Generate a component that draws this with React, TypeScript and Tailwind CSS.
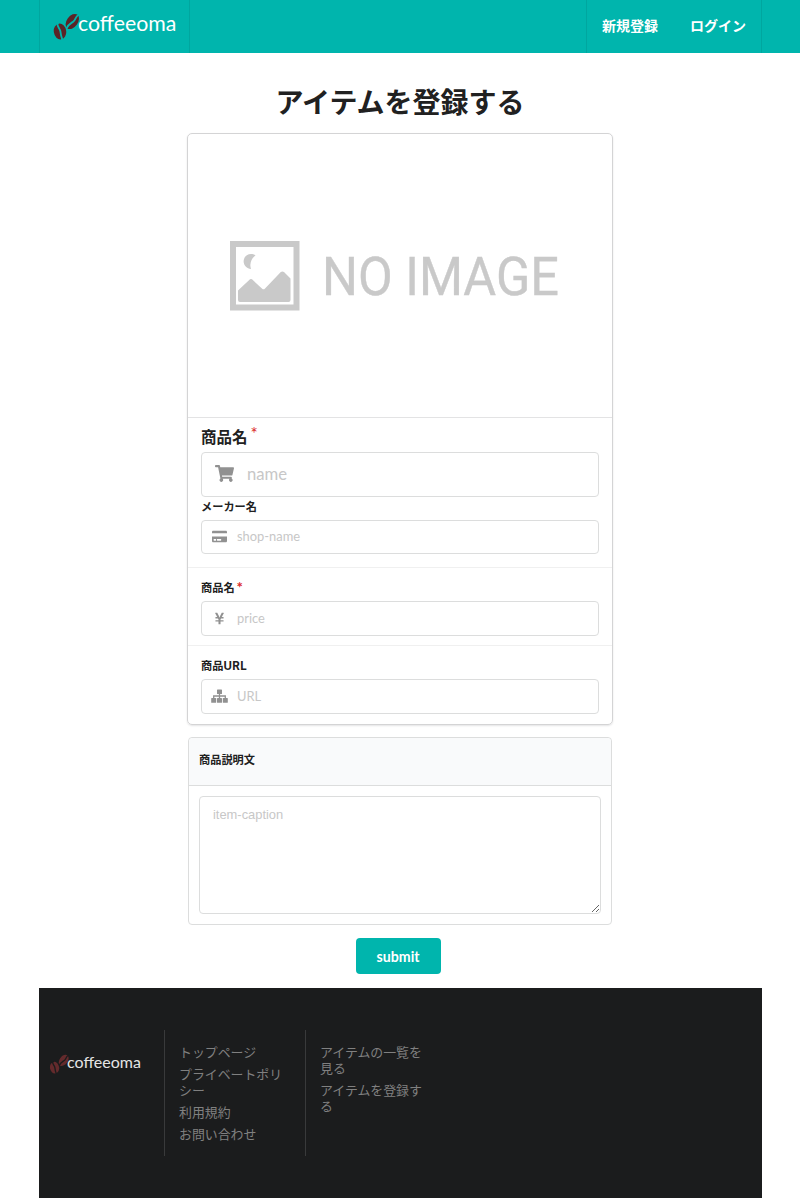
import type { ReactNode } from "react";
import { FaCreditCard, FaShoppingCart, FaYenSign } from "react-icons/fa";

function Beans({ className }: { className: string }) {
  return (
    <svg viewBox="0 0 26 27" className={className} aria-hidden="true">
      <g transform="rotate(-8 7 18.5)">
        <ellipse cx="7" cy="18.500" rx="6.200" ry="7.900" fill="currentColor" />
        <path d="M5.800 9.500c-1.500 4 1.800 5.500 1.600 9-.1 2.600-.1 4.500.8 8.500" fill="none" className="stroke-(--gap)" strokeWidth="1.800" />
      </g>
      <g transform="rotate(36 19.300 8.500)">
        <ellipse cx="19.300" cy="8.500" rx="5.500" ry="8.500" fill="currentColor" />
        <path d="M20.500-.8c-1.800 4.200.7 5.500-.4 9-.8 2.500-2.400 4.500-1.400 9.500" fill="none" className="stroke-(--gap)" strokeWidth="1.800" />
      </g>
    </svg>
  );
}

function SitemapIcon() {
  return (
    <svg viewBox="0 0 17 14" className="-mt-px h-[14px] w-[17px]" fill="currentColor" aria-hidden="true">
      <rect x="6" y="0.500" width="5" height="4.500" rx="0.600" />
      <rect x="0.200" y="9" width="5" height="4.800" rx="0.600" />
      <rect x="6" y="9" width="5" height="4.800" rx="0.600" />
      <rect x="11.800" y="9" width="5" height="4.800" rx="0.600" />
      <path d="M8.500 4.500v5M2.700 9.500V7h11.600v2.500" fill="none" stroke="currentColor" strokeWidth="1.300" />
    </svg>
  );
}

function NoImage() {
  return (
    <svg viewBox="0 0 424 283" className="block h-[283px] w-full" role="img" aria-label="NO IMAGE">
      <rect x="45" y="110" width="63.500" height="63.500" fill="none" stroke="#c9c9c9" strokeWidth="6" />
      <path d="M67.500 121.300a7.500 7.500 0 1 0-4.500 13.600q-2.500-7.500 4.500-13.600z" fill="#c9c9c9" />
      <path d="M50 156.500l12-11.200q1-.8 2 0l10.200 9.500q1.300 1 2.600 0L92.800 138q1.600-1.200 3.200 0l6.500 6.500V166q0 2-2 2H52q-2 0-2-2z" fill="#c9c9c9" />
      <text x="134" y="161" fill="#c9c9c9" stroke="#c9c9c9" strokeWidth="0.400" fontFamily="Roboto, sans-serif" fontSize="53.500" textLength="237" lengthAdjust="spacingAndGlyphs">
        NO IMAGE
      </text>
    </svg>
  );
}

function Field({ icon, placeholder, className = "h-[35px]", large = false }: { icon: ReactNode; placeholder: string; className?: string; large?: boolean }) {
  return (
    <div className={`flex items-center rounded border border-[#dcdddd] bg-white ${className}`}>
      <span className={`flex shrink-0 justify-center text-[#919191] ${large ? "w-[45px]" : "w-[35px]"}`}>{icon}</span>
      <input
        placeholder={placeholder}
        className={`min-w-0 flex-1 bg-transparent outline-none placeholder:text-[#c7c7c7] ${large ? "pt-px text-[16.700px]" : "text-[12.900px]"}`}
      />
    </div>
  );
}

export default function App() {
  return (
    <div className="flex h-[1198px] w-[800px] flex-col overflow-hidden bg-white font-['Lato','Noto_Sans_CJK_JP',sans-serif] text-[#212121]">
      <header className="h-[53px] shrink-0 bg-[#00b5ad] pr-[38px] pl-[39px] text-white">
        <div className="flex h-full justify-between">
          <a className="flex w-[151px] items-start border-x border-[#00a69f] pt-3 pl-[13px]">
            <Beans className="mt-px h-[27px] w-[26px] shrink-0 text-[#5b2427] [--gap:#00b5ad]" />
            <span className="-ml-px text-[21.300px] leading-[23px]">coffeeoma</span>
          </a>
          <nav className="flex w-[176px] items-center border-x border-[#00a69f] pb-[3px] pl-[15px] text-[14px] font-bold">
            <a className="mr-8">新規登録</a>
            <a>ログイン</a>
          </nav>
        </div>
      </header>

      <main className="flex h-[935px] shrink-0 flex-col items-center">
        <h1 className="mt-[29px] h-[51px] text-[28px] leading-[40px] font-bold">アイテムを登録する</h1>

        <section className="h-[592px] w-[426px] shrink-0 rounded-[5px] border border-[#d4d4d5] shadow-[0_1px_2px_0_#e4e4e5]">
          <NoImage />
          <div className="h-[150px] border-t border-[#e3e3e4] px-[13px]">
            <label className="flex h-[34px] items-center gap-[3px] pt-1 text-[15.500px] leading-[30px] font-bold">
              商品名<span className="-mt-1.5 text-[17px] font-normal text-[#db2828]">*</span>
            </label>
            <Field large className="h-[45px]" placeholder="name" icon={<FaShoppingCart size={19} className="-mt-0.5" />} />
            <label className="block h-[23px] text-[11.200px] leading-[20px] font-bold">メーカー名</label>
            <Field className="h-[34px]" placeholder="shop-name" icon={<FaCreditCard size={15} className="-mt-px" />} />
          </div>
          <div className="h-[78px] border-t border-[#f0f0f0] px-[13px] pt-[10px]">
            <label className="flex h-[23px] items-start gap-0.5 text-[11.200px] leading-[20px] font-bold">
              商品名<span className="-mt-px text-[15px] text-[#db2828]">*</span>
            </label>
            <Field placeholder="price" icon={<FaYenSign size={13} />} />
          </div>
          <div className="border-t border-[#f0f0f0] px-[13px] pt-[10px]">
            <label className="block h-[23px] text-[11.200px] leading-[20px] font-bold">
              商品<span className="font-['Inter',sans-serif] text-[11.500px] tracking-[0.5px]">URL</span>
            </label>
            <Field placeholder="URL" icon={<SitemapIcon />} />
          </div>
        </section>

        <section className="mt-3 h-[188px] w-[424px] shrink-0 rounded border border-[#dcdddd]">
          <h2 className="h-[48px] rounded-t border-b border-[#dcdddd] bg-[#f9fafb] pl-[10px] text-[11.200px] leading-[44px] font-bold">商品説明文</h2>
          <div className="p-[10px]">
            <textarea
              placeholder="item-caption"
              className="block h-[118px] w-full resize rounded border border-[#dcdddd] px-[13px] py-[9px] font-['Liberation_Sans',sans-serif] text-[12.900px] leading-[18px] outline-none placeholder:text-[#c7c7c7]"
            />
          </div>
        </section>

        <button className="mt-[13px] mr-[3px] h-[36px] w-[85px] shrink-0 rounded bg-[#00b5ad] pr-px text-[14.200px] leading-[21px] font-bold text-white">submit</button>
      </main>

      <footer className="mr-[38px] ml-[39px] flex h-[210px] bg-[#1b1c1d] pt-[42px] text-[12.900px] leading-[16px] text-[#808080]">
        <div className="flex h-[126px] w-[125px] items-start pt-6 pl-[10px]">
          <Beans className="h-[20px] w-[20px] shrink-0 text-[#642a2c] [--gap:#1b1c1d]" />
          <span className="-ml-0.5 text-[16px] leading-[16px] text-[#e5e5e5]">coffeeoma</span>
        </div>
        <nav className="flex h-[126px] w-[141px] flex-col gap-1.5 border-l border-[#393a3b] pt-[14px] pl-[14px]">
          <a>トップページ</a>
          <a className="whitespace-nowrap">プライベートポリ<br />シー</a>
          <a>利用規約</a>
          <a>お問い合わせ</a>
        </nav>
        <nav className="flex h-[126px] w-[141px] flex-col gap-1.5 border-l border-[#393a3b] pt-[14px] pl-[14px]">
          <a>アイテムの一覧を<br />見る</a>
          <a>アイテムを登録す<br />る</a>
        </nav>
      </footer>
    </div>
  );
}
